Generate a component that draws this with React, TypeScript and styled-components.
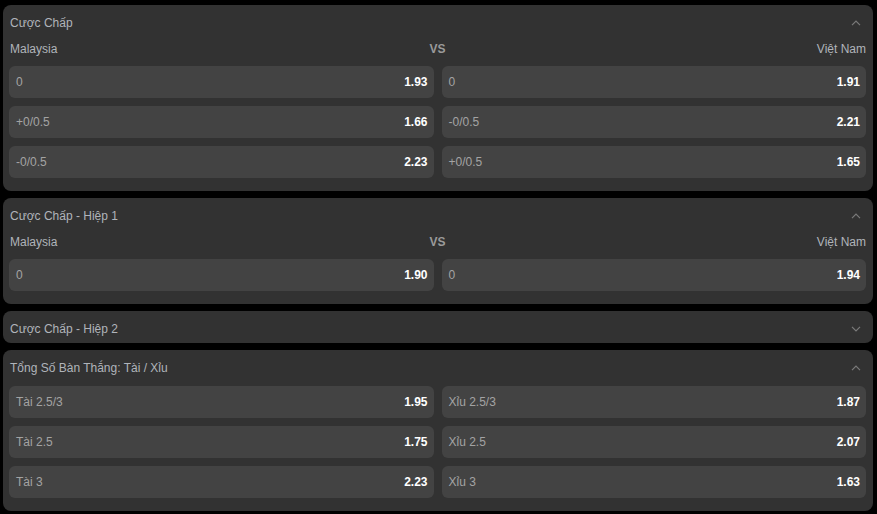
import React from 'react';
import styled, { createGlobalStyle } from 'styled-components';

interface Odd {
  label: string;
  value: string;
}

interface Market {
  title: string;
  open: boolean;
  teams?: [string, string];
  rows: [Odd, Odd][];
}

const markets: Market[] = [
  {
    title: 'Cược Chấp',
    open: true,
    teams: ['Malaysia', 'Việt Nam'],
    rows: [
      [{ label: '0', value: '1.93' }, { label: '0', value: '1.91' }],
      [{ label: '+0/0.5', value: '1.66' }, { label: '-0/0.5', value: '2.21' }],
      [{ label: '-0/0.5', value: '2.23' }, { label: '+0/0.5', value: '1.65' }],
    ],
  },
  {
    title: 'Cược Chấp - Hiệp 1',
    open: true,
    teams: ['Malaysia', 'Việt Nam'],
    rows: [[{ label: '0', value: '1.90' }, { label: '0', value: '1.94' }]],
  },
  {
    title: 'Cược Chấp - Hiệp 2',
    open: false,
    rows: [],
  },
  {
    title: 'Tổng Số Bàn Thắng: Tài / Xỉu',
    open: true,
    rows: [
      [{ label: 'Tài 2.5/3', value: '1.95' }, { label: 'Xỉu 2.5/3', value: '1.87' }],
      [{ label: 'Tài 2.5', value: '1.75' }, { label: 'Xỉu 2.5', value: '2.07' }],
      [{ label: 'Tài 3', value: '2.23' }, { label: 'Xỉu 3', value: '1.63' }],
    ],
  },
];

const Chevron = ({ up }: { up: boolean }) => (
  <svg width="10" height="6" viewBox="0 0 10 6" fill="none">
    <path
      d={up ? 'M1 5.2L5 1.2L9 5.2' : 'M1 0.8L5 4.8L9 0.8'}
      stroke="#7a7a7a"
      strokeWidth="1.2"
    />
  </svg>
);

const App = () => {
  return (
    <>
      <GlobalStyle />
      <Page>
        {markets.map(market => (
          <Panel key={market.title}>
            <Header>
              <Title>{market.title}</Title>
              <Chevron up={market.open} />
            </Header>
            {market.open && (
              <Body>
                {market.teams && (
                  <TeamRow>
                    <Team>{market.teams[0]}</Team>
                    <Vs>VS</Vs>
                    <Team $right>{market.teams[1]}</Team>
                  </TeamRow>
                )}
                <OddsGrid>
                  {market.rows.map((row, i) =>
                    row.map((odd, j) => (
                      <OddBox key={`${i}-${j}`}>
                        <Label>{odd.label}</Label>
                        <Value>{odd.value}</Value>
                      </OddBox>
                    ))
                  )}
                </OddsGrid>
              </Body>
            )}
          </Panel>
        ))}
      </Page>
    </>
  );
};

const GlobalStyle = createGlobalStyle`
  body {
    margin: 0;
    background: #000;
    font-family: "Liberation Sans", Arial, sans-serif;
  }
`;

const Page = styled.div`
  display: flex;
  flex-direction: column;
  gap: 7px;
  padding: 5px 4px 3px 3px;
`;

const Panel = styled.section`
  background: #323232;
  border-radius: 8px;
  overflow: hidden;
`;

const Header = styled.div`
  display: flex;
  align-items: center;
  justify-content: space-between;
  height: 32px;
  padding: 3px 12px 0 7px;
  box-sizing: border-box;
`;

const Title = styled.div`
  color: #b0b4ba;
  font-size: 12px;
`;

const Body = styled.div`
  padding: 0 7px 13px 6px;
`;

const TeamRow = styled.div`
  display: grid;
  grid-template-columns: 1fr auto 1fr;
  align-items: center;
  height: 25px;
  padding-bottom: 1px;
  box-sizing: border-box;
`;

const Team = styled.div<{ $right?: boolean }>`
  color: #b0b4ba;
  font-size: 12px;
  text-align: ${props => (props.$right ? 'right' : 'left')};
  padding-left: ${props => (props.$right ? '0' : '1px')};
`;

const Vs = styled.div`
  color: #9a9a9a;
  font-size: 12px;
  font-weight: bold;
`;

const OddsGrid = styled.div`
  display: grid;
  grid-template-columns: 1fr 1fr;
  gap: 8px;
  margin-top: 4px;
`;

const OddBox = styled.div`
  display: flex;
  align-items: center;
  justify-content: space-between;
  height: 32px;
  padding: 0 6px 0 7px;
  background: #434343;
  border-radius: 6px;
  font-size: 12px;
`;

const Label = styled.span`
  color: #a3a3a3;
`;

const Value = styled.span`
  color: #fff;
  font-weight: bold;
`;

export default App;
